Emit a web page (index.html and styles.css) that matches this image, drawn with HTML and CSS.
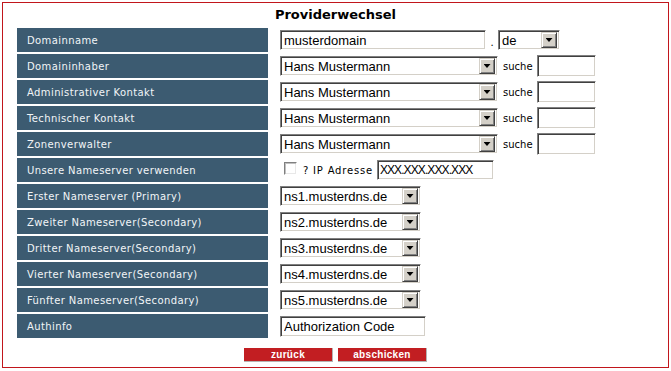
FILE: index.html
```html
<!DOCTYPE html>
<html lang="de">
<head>
<meta charset="utf-8">
<title>Providerwechsel</title>
<link rel="stylesheet" href="styles.css">
</head>
<body>
<div class="frame">
  <h1 class="title">Providerwechsel</h1>
  <div class="form">
    <div class="row">
      <div class="label">Domainname</div>
      <div class="ctrl">
        <input class="field w-domain" type="text" value="musterdomain">
        <span class="dot">.</span>
        <span class="select w-tld"><span class="val">de</span><span class="btn"></span></span>
      </div>
    </div>
    <div class="row">
      <div class="label">Domaininhaber</div>
      <div class="ctrl">
        <span class="select w-person"><span class="val">Hans Mustermann</span><span class="btn"></span></span>
        <span class="small">suche</span>
        <input class="field w-search" type="text">
      </div>
    </div>
    <div class="row">
      <div class="label">Administrativer Kontakt</div>
      <div class="ctrl">
        <span class="select w-person"><span class="val">Hans Mustermann</span><span class="btn"></span></span>
        <span class="small">suche</span>
        <input class="field w-search" type="text">
      </div>
    </div>
    <div class="row">
      <div class="label">Technischer Kontakt</div>
      <div class="ctrl">
        <span class="select w-person"><span class="val">Hans Mustermann</span><span class="btn"></span></span>
        <span class="small">suche</span>
        <input class="field w-search" type="text">
      </div>
    </div>
    <div class="row">
      <div class="label">Zonenverwalter</div>
      <div class="ctrl">
        <span class="select w-person"><span class="val">Hans Mustermann</span><span class="btn"></span></span>
        <span class="small">suche</span>
        <input class="field w-search" type="text">
      </div>
    </div>
    <div class="row">
      <div class="label">Unsere Nameserver verwenden</div>
      <div class="ctrl">
        <input class="check" type="checkbox">
        <span class="small ip-label">? IP Adresse</span>
        <input class="field w-ip" type="text" value="XXX.XXX.XXX.XXX">
      </div>
    </div>
    <div class="row">
      <div class="label">Erster Nameserver (Primary)</div>
      <div class="ctrl"><span class="select w-ns"><span class="val">ns1.musterdns.de</span><span class="btn"></span></span></div>
    </div>
    <div class="row">
      <div class="label">Zweiter Nameserver(Secondary)</div>
      <div class="ctrl"><span class="select w-ns"><span class="val">ns2.musterdns.de</span><span class="btn"></span></span></div>
    </div>
    <div class="row">
      <div class="label">Dritter Nameserver(Secondary)</div>
      <div class="ctrl"><span class="select w-ns"><span class="val">ns3.musterdns.de</span><span class="btn"></span></span></div>
    </div>
    <div class="row">
      <div class="label">Vierter Nameserver(Secondary)</div>
      <div class="ctrl"><span class="select w-ns"><span class="val">ns4.musterdns.de</span><span class="btn"></span></span></div>
    </div>
    <div class="row">
      <div class="label">Fünfter Nameserver(Secondary)</div>
      <div class="ctrl"><span class="select w-ns"><span class="val">ns5.musterdns.de</span><span class="btn"></span></span></div>
    </div>
    <div class="row">
      <div class="label">Authinfo</div>
      <div class="ctrl"><input class="field w-auth" type="text" value="Authorization Code"></div>
    </div>
  </div>
  <div class="actions">
    <button class="action" type="button">zurück</button>
    <button class="action" type="button">abschicken</button>
  </div>
</div>
</body>
</html>
```

FILE: styles.css
```css
html, body {
  margin: 0;
  padding: 0;
  background: #ffffff;
}

.frame {
  box-sizing: border-box;
  width: 667px;
  height: 366px;
  margin: 2px;
  border: 1px solid #c1161c;
  padding: 0 0 0 14px;
}

.title {
  margin: 0 0 0 -14px;
  height: 25px;
  text-align: center;
  font: bold 13px/23px "DejaVu Sans", Verdana, sans-serif;
  color: #000;
}

.form {
  display: flex;
  flex-direction: column;
  gap: 2px;
}

.row {
  display: flex;
  align-items: center;
  height: 24px;
}

.label {
  box-sizing: border-box;
  width: 251px;
  height: 24px;
  padding-left: 10px;
  display: flex;
  align-items: center;
  background: #3c5b71;
  color: #f2f5f7;
  font: 10px "DejaVu Sans", Verdana, sans-serif;
  letter-spacing: 0.4px;
}

.ctrl {
  margin-left: 12px;
  display: flex;
  align-items: center;
  height: 24px;
}

.field,
.select {
  box-sizing: border-box;
  height: 20px;
  border: 1px solid;
  border-color: #808080 #ffffff #ffffff #808080;
  box-shadow: inset 1px 1px #404040, inset -1px -1px #d4d0c8;
  background: #ffffff;
  color: #000;
  font: 13px "Liberation Sans", Arial, sans-serif;
}

.field {
  padding: 0 2px 0 3px;
  margin: 0;
  outline: none;
}

.select {
  display: inline-flex;
  align-items: center;
  padding: 1px 2px 1px 1px;
}

.val {
  flex: 1;
  padding-left: 2px;
  white-space: nowrap;
  overflow: hidden;
}

.btn {
  box-sizing: border-box;
  width: 16px;
  height: 16px;
  flex: none;
  background: #d4d0c8;
  border: 1px solid;
  border-color: #d4d0c8 #404040 #404040 #d4d0c8;
  box-shadow: inset 1px 1px #ffffff, inset -1px -1px #808080;
  display: flex;
  align-items: center;
  justify-content: center;
}

.btn::after {
  content: "";
  width: 7px;
  height: 4px;
  background: #000;
  clip-path: polygon(0 0, 100% 0, 50% 100%);
}

.w-domain { width: 206px; }
.w-tld { width: 62px; }
.w-person { width: 218px; }
.w-search { width: 59px; height: 22px; margin-left: 4px; }
.w-ip {
  width: 117px;
  margin-left: 4px;
  padding-left: 2px;
  font-size: 12px;
  letter-spacing: -0.9px;
}
.w-ns { width: 141px; }
.w-auth { width: 146px; height: 21px; }

.dot {
  width: 12px;
  text-align: center;
  font: 10px "DejaVu Sans", Verdana, sans-serif;
  padding-top: 4px;
}

.small {
  font: 10px "DejaVu Sans", Verdana, sans-serif;
  color: #000;
  margin-left: 5px;
}

.ip-label {
  margin-left: 6px;
  letter-spacing: 0.8px;
}

.check {
  appearance: none;
  -webkit-appearance: none;
  box-sizing: border-box;
  width: 13px;
  height: 13px;
  margin: 0 0 4px 4px;
  border: 1px solid;
  border-color: #808080 #ffffff #ffffff #808080;
  box-shadow: inset 1px 1px #c0c0c0, inset -1px -1px #e8e8e8;
  background: #ffffff;
}

.actions {
  display: flex;
  justify-content: center;
  gap: 5px;
  margin: 10px 0 0 -14px;
}

.action {
  box-sizing: border-box;
  width: 89px;
  height: 14px;
  padding: 0;
  border: 0;
  border-right: 1px solid #b4b4b4;
  border-bottom: 1px solid #b4b4b4;
  background: #c21e22;
  color: #ffffff;
  font: bold 10px/13px "Liberation Sans", Arial, sans-serif;
  letter-spacing: 0.3px;
}
```
